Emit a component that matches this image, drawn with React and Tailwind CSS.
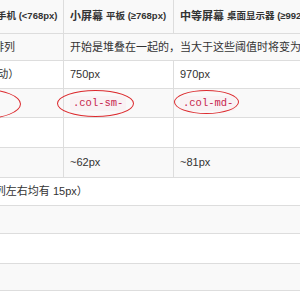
const font = { fontFamily: '"Liberation Sans", "Noto Sans CJK SC", sans-serif' };

const Code = ({ children }) => (
  <code className="inline-block rounded-sm bg-[#f9f2f4] px-[3px] font-['Liberation_Mono',monospace] text-[10.5px] leading-[15px] text-[#c7254e]">
    {children}
  </code>
);

const Ellipse = ({ className }) => (
  <span className={`pointer-events-none absolute rounded-[50%] border-[1.5px] border-[#dc2a2e] ${className}`} />
);

const Row = ({ h, striped, top = true, children }) => (
  <div
    className={`flex ${top ? "border-t border-[#dddddd]" : ""} ${striped ? "bg-[#f9f9f9]" : "bg-white"}`}
    style={{ height: h }}
  >
    {children}
  </div>
);

const C1 = ({ children, className = "" }) => (
  <div className={`relative flex w-[122px] shrink-0 items-center whitespace-nowrap border-r border-[#dddddd] pl-[7px] ${className}`}>
    {children}
  </div>
);
const C2 = ({ children, className = "" }) => (
  <div className={`relative flex w-[110px] shrink-0 items-center whitespace-nowrap border-r border-[#dddddd] pl-[6px] ${className}`}>
    {children}
  </div>
);
const C3 = ({ children, className = "" }) => (
  <div className={`relative flex flex-1 items-center whitespace-nowrap pl-[6px] ${className}`}>{children}</div>
);

export default function App() {
  return (
    <div className="h-[300px] w-[300px] overflow-hidden bg-white text-[11px] text-[#333333]" style={font}>
      <div className="ml-[-58px] w-[520px]">
        <Row h={33} striped top={false}>
          <C1 className="font-bold">
            <span className="text-[11px]">超小屏幕</span>
            <span className="ml-[4px] text-[9.5px]">手机 (&lt;768px)</span>
          </C1>
          <C2 className="font-bold">
            <span className="text-[11px]">小屏幕</span>
            <span className="ml-[3px] text-[9.5px]">平板 (≥768px)</span>
          </C2>
          <C3 className="font-bold">
            <span className="text-[11px]">中等屏幕</span>
            <span className="ml-[3px] text-[9.5px]">桌面显示器 (≥992px)</span>
          </C3>
        </Row>
        <Row h={27} striped>
          <C1>总是水平排列</C1>
          <div className="flex flex-1 items-center whitespace-nowrap pl-[6px]">
            开始是堆叠在一起的，当大于这些阈值时将变为水平排列
          </div>
        </Row>
        <Row h={28}>
          <C1>None（自动）</C1>
          <C2>750px</C2>
          <C3>970px</C3>
        </Row>
        <Row h={29} striped>
          <C1>
            <Ellipse className="left-[3px] top-0 h-[30px] w-[76px]" />
          </C1>
          <C2>
            <Code>.col-sm-</Code>
            <Ellipse className="left-[-7px] top-[1px] h-[27px] w-[77px]" />
          </C2>
          <C3>
            <Code>.col-md-</Code>
            <Ellipse className="left-0 top-[1px] h-[24px] w-[65px]" />
          </C3>
        </Row>
        <Row h={30}>
          <C1 />
          <C2 />
          <C3 />
        </Row>
        <Row h={30} striped>
          <C1 />
          <C2>~62px</C2>
          <C3>~81px</C3>
        </Row>
        <Row h={28}>
          <div className="flex flex-1 items-center whitespace-nowrap pl-[7px]">
            30px（每列左右均有 15px）
          </div>
        </Row>
        <Row h={28} striped />
        <Row h={30} />
        <Row h={27} striped />
        <Row h={30} />
      </div>
    </div>
  );
}
